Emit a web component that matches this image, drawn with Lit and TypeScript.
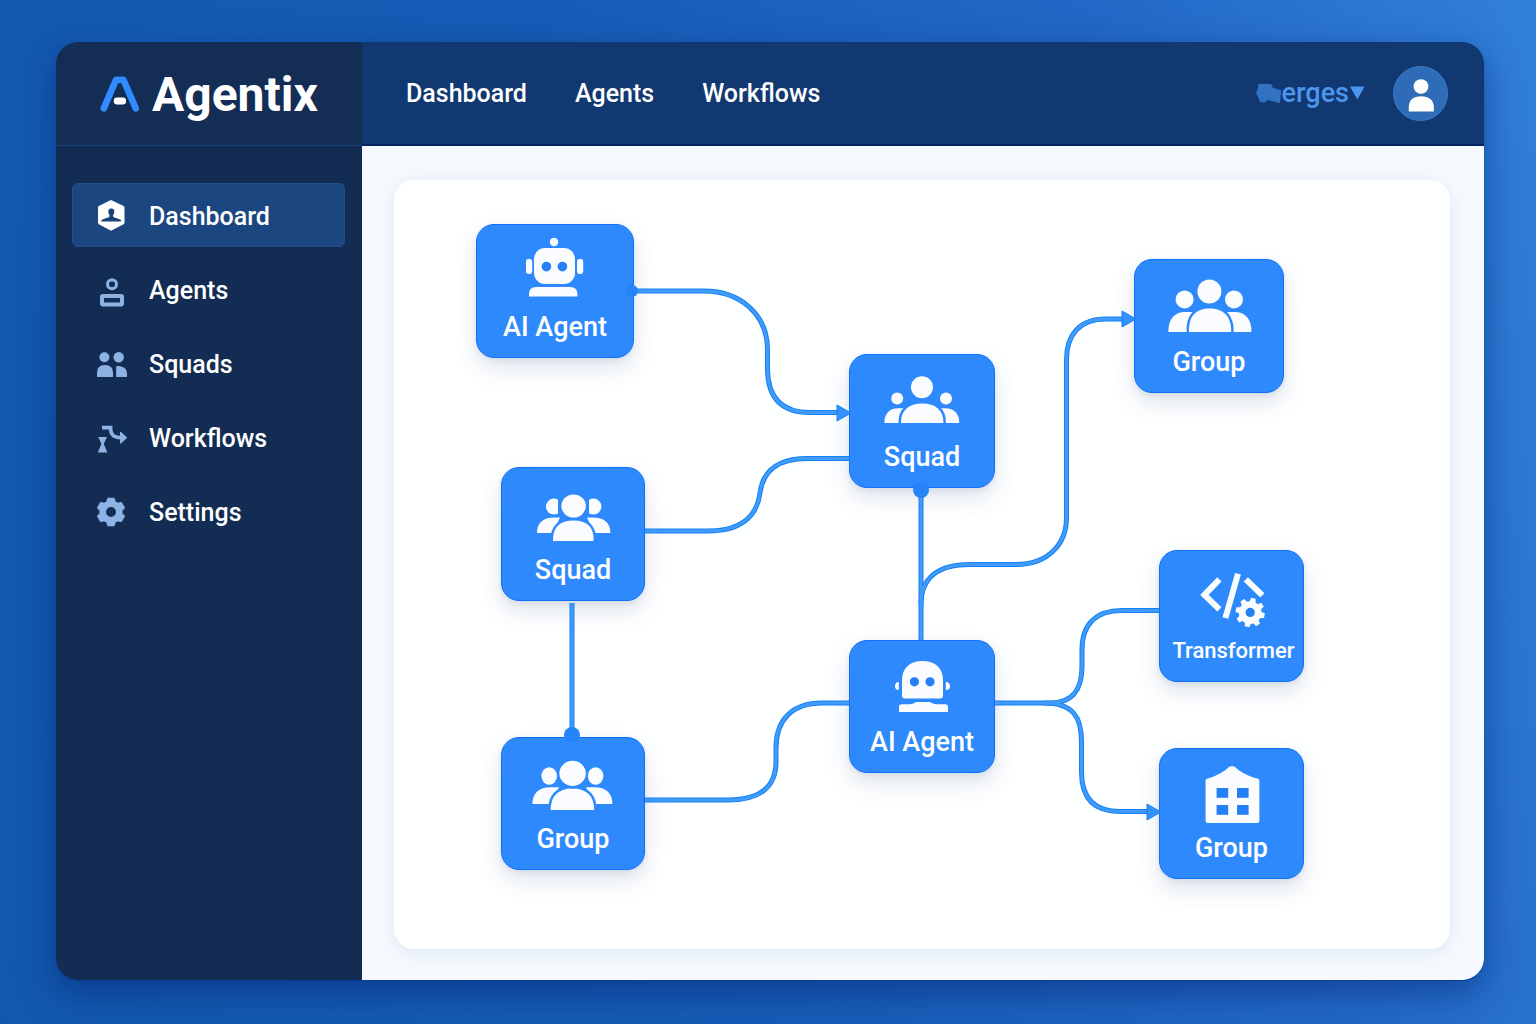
import { LitElement, html, svg, css } from "lit";
import { customElement, property, state } from "lit/decorators.js";
import { classMap } from "lit/directives/class-map.js";
import { styleMap } from "lit/directives/style-map.js";

/** Closed outline of a gear with evenly spaced, slightly tapered teeth. */
function gearPath(cx: number, cy: number, teeth: number, outer: number, inner: number, turnBy = 0): string {
  const step = (Math.PI * 2) / teeth;
  const points: string[] = [];
  for (let i = 0; i < teeth; i++) {
    const mid = i * step - Math.PI / 2 + turnBy;
    const corners: [number, number][] = [
      [inner, -0.34],
      [outer, -0.2],
      [outer, 0.2],
      [inner, 0.34],
    ];
    for (const [radius, turn] of corners) {
      const angle = mid + turn * step;
      points.push(`${(cx + radius * Math.cos(angle)).toFixed(2)} ${(cy + radius * Math.sin(angle)).toFixed(2)}`);
    }
  }
  return `M${points.join("L")}Z`;
}

const menuIcons = {
  dashboard: svg`
    <path d="M16 -1 L28.6 5 Q29.5 5.6 29.5 6.6 V21.6 Q29.5 22.6 28.6 23.2 L16 29.8 L3.8 23.2 Q3 22.6 3 21.6 V6.6 Q3 5.6 3.8 5 Z" fill="#fff"/>
    <path d="M16.3 7.6 C14 7.6 13.2 9.2 13.3 11 C13.4 12.8 14.6 13.6 14.6 15 C14.4 17 9 17.2 6.4 19.2 C6 20 6.6 20.4 8 20.4 H24.6 C26 20.4 26.8 20 26.2 19.2 C23.6 17.2 18.2 17 18 15 C18 13.6 19.2 12.8 19.3 11 C19.4 9.2 18.6 7.6 16.3 7.6 Z" fill="#1b4279"/>`,
  agents: svg`
    <circle cx="17" cy="9.3" r="4.5" fill="none" stroke="currentColor" stroke-width="3"/>
    <rect x="7" y="21" width="20" height="8.4" rx="1" fill="none" stroke="currentColor" stroke-width="4"/>`,
  squads: svg`
    <circle cx="9.4" cy="8.3" r="5" fill="currentColor"/>
    <circle cx="23.7" cy="8.3" r="5.2" fill="currentColor"/>
    <path d="M2 28 V23.6 Q2 16 10 16 Q18 16 18 23.6 V28 Z" fill="currentColor"/>
    <path d="M21.2 28 V18 Q21.2 17 22.4 17 C28.6 17 32 20 32 24.6 V28 Z" fill="currentColor"/>`,
  workflows: svg`
    <path d="M7 4.6 H15.6 C15.4 11 18 14.6 26 14.6" fill="none" stroke="currentColor" stroke-width="3.6"/>
    <path d="M25 9 Q25.4 8.6 26 9 L31.6 14 Q32 14.7 31.6 15.3 L26 20.4 Q25.4 20.8 25 20.2 Z" fill="currentColor"/>
    <path d="M3.2 14 H12 L8.8 21 L12.4 29.6 H2.8 L6.4 21 Z" fill="currentColor"/>`,
  settings: svg`
    <path fill-rule="evenodd" stroke="currentColor" stroke-width="2" stroke-linejoin="round" fill="currentColor"
      d="${gearPath(16, 15, 6, 13.6, 10.6)} M16 9 A6 6 0 1 0 16 21 A6 6 0 1 0 16 9 Z"/>`,
};

const nodeIcons = {
  robot: svg`
    <circle cx="47" cy="11" r="4.2"/>
    <rect x="27" y="17" width="41" height="36" rx="11"/>
    <circle class="hole" cx="39.4" cy="35.6" r="4.8"/>
    <circle class="hole" cx="55.4" cy="35.6" r="4.8"/>
    <rect x="19" y="28" width="6.2" height="15" rx="2.4"/>
    <rect x="70" y="28" width="6.2" height="15" rx="2.4"/>
    <path d="M22 65.6 V63 Q22 56 29 56 H63 Q70.4 56 70.4 63 V65.6 Z"/>`,
  assistant: svg`
    <path d="M30.4 51.4 Q28 51.4 28 49 V33 C28 21 36 14 48.4 14 C61 14 69 21 69 33 V49 Q69 51.4 66.6 51.4 Z"/>
    <circle class="hole" cx="40.4" cy="34.8" r="4.6"/>
    <circle class="hole" cx="56" cy="34.8" r="4.6"/>
    <path d="M24.8 35 V43 C22.6 43.4 21 41.6 21 39 C21 36.6 22.6 34.6 24.8 35 Z"/>
    <path d="M71.8 35 V43 C74.4 43.4 76 41.6 76 39 C76 36.6 74.4 34.6 71.8 35 Z"/>
    <path d="M25 65 V60 Q25 57.2 27.8 57.2 H36 C40 57.2 40 55 44 55 H54 C58 55 58 57.2 62 57.2 H71.2 Q74 57.2 74 60 V65 Z"/>`,
  squadSmall: svg`
    <circle cx="23.2" cy="37.6" r="6"/>
    <circle cx="72" cy="37.6" r="6"/>
    <path d="M10.4 62 C10 53 15.6 47.2 24 47.2 H30 V62 Z"/>
    <path d="M85.2 62 C85.6 53 80 47.2 71.6 47.2 H66 V62 Z"/>
    <path class="front" d="M27 62 C26.6 49 35 42.4 48.2 42.4 C61.4 42.4 69.8 49 69.4 62 Z"/>
    <circle cx="48" cy="26.2" r="11"/>`,
  groupWide: svg`
    <circle cx="23.6" cy="33.4" r="9"/>
    <circle cx="73" cy="33.4" r="9"/>
    <path d="M7.4 66 C7 53 13.6 46 24 46 H34 V66 Z"/>
    <path d="M90.4 66 C90.8 53 84.2 46 73.8 46 H62 V66 Z"/>
    <path class="front" d="M28 66 C27.4 50 35 42.4 48.6 42.4 C62.2 42.4 70.6 50 70.2 66 Z"/>
    <circle class="front" cx="48.4" cy="25.4" r="12"/>`,
  squadTight: svg`
    <ellipse cx="29" cy="32.6" rx="8" ry="8"/>
    <ellipse cx="68.4" cy="32.6" rx="8" ry="8"/>
    <rect class="gap" x="33" y="22" width="31" height="20"/>
    <path d="M12 59 C12 49 18 43.6 29 43.6 H35 L28 59 Z"/>
    <path d="M85.4 59 C85.4 49 79.4 43.6 68 43.6 H62 L69 59 Z"/>
    <path class="front" d="M28 67 C27.6 53 35 46.6 48.4 46.6 C61.8 46.6 69.2 53 68.6 67 Z"/>
    <ellipse class="front" cx="48.6" cy="32" rx="12.2" ry="11.6"/>`,
  groupTight: svg`
    <ellipse cx="24.2" cy="32" rx="7.8" ry="8.8"/>
    <ellipse cx="70.6" cy="32" rx="7.8" ry="8.8"/>
    <path d="M7.4 60 C7.4 49 14 43.2 25 43.2 H34 L27 60 Z"/>
    <path d="M87.4 60 C87.4 49 80.8 43.2 70 43.2 H61 L68 60 Z"/>
    <path class="front" d="M25.6 66 C25.6 52 33 44.4 47.4 44.4 C61.8 44.4 69.2 52 69.2 66 Z"/>
    <ellipse class="front" cx="47.6" cy="29.4" rx="13.2" ry="12.6"/>`,
  code: svg`
    <path class="line" d="M35.4 22.4 L20.4 38 L35.4 52.4"/>
    <path class="line" d="M54 16.8 L41.4 61"/>
    <path class="line" d="M61.8 22.4 L78.4 38.4"/>
    <path class="front" stroke-linejoin="round" d="${gearPath(66.2, 55.6, 8, 14.8, 11.4, 0.22)}"/>
    <circle class="hole" cx="66.2" cy="55.4" r="4.6"/>`,
  building: svg`
    <path d="M21.6 26 Q21.6 24.4 23 23.8 C32 21 38 18 42.6 14 Q48 8 53.4 14 C58 18 64 21 74 23.8 Q75.4 24.4 75.4 26 V66 Q75.4 68 73.4 68 H23.6 Q21.6 68 21.6 66 Z"/>
    <rect class="hole" x="32.6" y="33" width="11.6" height="9.8"/>
    <rect class="hole" x="53" y="33" width="11.6" height="9.8"/>
    <rect class="hole" x="32.6" y="50" width="11.6" height="9.8"/>
    <rect class="hole" x="53" y="50" width="11.6" height="9.8"/>`,
};

interface FlowNode {
  label: string;
  icon: keyof typeof nodeIcons;
  x: number;
  y: number;
  w: number;
  h: number;
  compact?: boolean;
}

const nodes: FlowNode[] = [
  { label: "AI Agent", icon: "robot", x: 82, y: 44, w: 158, h: 134 },
  { label: "Squad", icon: "squadSmall", x: 455, y: 174, w: 146, h: 134 },
  { label: "Group", icon: "groupWide", x: 740, y: 79, w: 150, h: 134 },
  { label: "Squad", icon: "squadTight", x: 107, y: 287, w: 144, h: 134 },
  { label: "Group", icon: "groupTight", x: 107, y: 557, w: 144, h: 133 },
  { label: "AI Agent", icon: "assistant", x: 455, y: 460, w: 146, h: 133 },
  { label: "Transformer", icon: "code", x: 765, y: 370, w: 145, h: 132, compact: true },
  { label: "Group", icon: "building", x: 765, y: 568, w: 145, h: 131 },
];

const edges: string[] = [
  "M240 111 H310 C346 111 373.5 134 373.5 170 V190 C374 218 388 232.5 416 232.5 H446",
  "M251 351 H314 C346 351 363 337 366 313 C369 290 384 278.5 414 278.5 H455",
  "M178 423 V557",
  "M251 620 H334 C367 620 382 606 382 582 V568 C382 540 398 523 428 523 H455",
  "M527 308 V460",
  "M527 424 C527 398 544 384.5 576 384.5 H622 C654 384.5 672.5 364 672.5 338 V180 C672.5 154 686 139 712 139 H732",
  "M601 523 H656 C680 523 688 508 688 486 V470 C688 444 702 430.5 728 430.5 H765",
  "M650 523 C680 523 687.5 538 687.5 562 V592 C687.5 618 700 631.5 726 631.5 H756",
];

const arrowTips: [number, number][] = [
  [457, 233],
  [742, 139],
  [767, 632],
];

const ports: [number, number, number][] = [
  [238, 111, 6],
  [178, 555, 8],
  [527, 310, 8],
];

@customElement("flow-node")
class FlowNodeCard extends LitElement {
  @property() label = "";
  @property() icon: keyof typeof nodeIcons = "robot";
  @property({ type: Boolean }) compact = false;

  static styles = css`
    :host {
      display: block;
    }
    .card {
      box-sizing: border-box;
      height: 100%;
      display: flex;
      flex-direction: column;
      align-items: center;
      justify-content: space-between;
      padding: 6px 0 14px;
      border: 1px solid #0f70fa;
      border-radius: 18px;
      background: #2e89fc;
      box-shadow: 0 10px 22px rgba(60, 90, 140, 0.16), 0 2px 5px rgba(60, 90, 140, 0.1);
    }
    .icon {
      flex: none;
      width: 96px;
      height: 72px;
      fill: #fafcff;
    }
    .hole {
      fill: #2580f6;
    }
    .gap {
      fill: #2e89fc;
    }
    .front {
      stroke: #2e89fc;
      stroke-width: 5;
      paint-order: stroke;
    }
    .line {
      fill: none;
      stroke: #fafcff;
      stroke-width: 6;
    }
    .label {
      font-size: 27px;
      line-height: 32px;
      font-weight: 500;
      color: #ffffff;
      white-space: nowrap;
    }
    .compact .label {
      font-size: 22px;
      padding-left: 4px;
    }
  `;

  render() {
    return html`
      <div class=${classMap({ card: true, compact: this.compact })}>
        <svg class="icon" viewBox="0 0 96 72" aria-hidden="true">${nodeIcons[this.icon]}</svg>
        <span class="label">${this.label}</span>
      </div>
    `;
  }
}

@customElement("flow-canvas")
class FlowCanvas extends LitElement {
  static styles = css`
    :host {
      display: block;
      position: relative;
      min-height: 740px;
      border-radius: 20px;
      background: #feffff;
      box-shadow: 0 4px 18px rgba(40, 90, 170, 0.12);
    }
    .edges {
      position: absolute;
      inset: 0;
      width: 100%;
      height: 100%;
      fill: none;
    }
    .rim {
      stroke: #1480f3;
      stroke-width: 5;
    }
    .core {
      stroke: #419bf8;
      stroke-width: 3;
    }
    .tip {
      fill: #3590fb;
      stroke: #1480f3;
      stroke-width: 1;
      stroke-linejoin: round;
    }
    .port {
      fill: #2484f8;
    }
    .node {
      position: absolute;
    }
  `;

  render() {
    return html`
      ${nodes.map(
        (n) => html`
          <flow-node
            class="node"
            .label=${n.label}
            .icon=${n.icon}
            .compact=${!!n.compact}
            style=${styleMap({ left: `${n.x}px`, top: `${n.y}px`, width: `${n.w}px`, height: `${n.h}px` })}
          ></flow-node>
        `,
      )}
      <svg class="edges" aria-hidden="true">
        ${edges.map((d) => svg`<path class="rim" d=${d}/>`)}
        ${edges.map((d) => svg`<path class="core" d=${d}/>`)}
        ${ports.map(([x, y, r]) => svg`<circle class="port" cx=${x} cy=${y} r=${r}/>`)}
        ${arrowTips.map(([x, y]) => svg`<path class="tip" d=${`M${x} ${y} L${x - 14} ${y - 8} V${y + 8} Z`}/>`)}
      </svg>
    `;
  }
}

const menu: { label: string; icon: keyof typeof menuIcons }[] = [
  { label: "Dashboard", icon: "dashboard" },
  { label: "Agents", icon: "agents" },
  { label: "Squads", icon: "squads" },
  { label: "Workflows", icon: "workflows" },
  { label: "Settings", icon: "settings" },
];

@customElement("app-root")
class AppRoot extends LitElement {
  @state() private active = "Dashboard";

  static styles = css`
    :host {
      box-sizing: border-box;
      display: flex;
      min-height: 100vh;
      padding: 42px 52px 44px 56px;
      font-family: Roboto, "Liberation Sans", sans-serif;
      background: linear-gradient(75deg, #1258ae 0%, #165cb6 45%, #2268c6 75%, #3180d9 100%);
    }
    .window {
      flex: 1;
      display: grid;
      grid-template-columns: 306px 1fr;
      grid-template-rows: 104px 1fr;
      border-radius: 22px;
      overflow: hidden;
      box-shadow: 0 1px 1px #0a3f9c, 0 12px 34px rgba(4, 32, 110, 0.5);
    }
    .brand {
      display: flex;
      align-items: center;
      gap: 12px;
      padding-left: 44px;
      background: #142d55;
      border-bottom: 1px solid #15427f;
      color: #ffffff;
    }
    .mark {
      width: 40px;
      height: 36px;
    }
    .name {
      padding-top: 2px;
      font-size: 48px;
      line-height: 56px;
      font-weight: 700;
    }
    .topbar {
      display: flex;
      align-items: center;
      justify-content: space-between;
      padding: 0 36px 0 44px;
      background: #123871;
      border-bottom: 2px solid #06245f;
    }
    .links {
      display: flex;
      gap: 48px;
    }
    .link {
      padding-top: 2px;
      font-size: 25px;
      line-height: 32px;
      font-weight: 500;
      color: #ffffff;
      text-decoration: none;
    }
    .account {
      display: flex;
      align-items: center;
      gap: 28px;
    }
    .picker {
      display: flex;
      align-items: center;
      padding: 0;
      border: 0;
      background: none;
      font: inherit;
      font-size: 27px;
      line-height: 32px;
      font-weight: 500;
      color: #4b96ee;
      cursor: pointer;
    }
    .blob {
      width: 27px;
      height: 21px;
      fill: #3272c2;
    }
    .caret {
      width: 16px;
      height: 14px;
      fill: #4b96ee;
    }
    .avatar {
      display: block;
      width: 55px;
      height: 55px;
      padding: 0;
      border: 0;
      border-radius: 50%;
      background: none;
      cursor: pointer;
    }
    .avatar svg {
      display: block;
      width: 100%;
      height: 100%;
    }
    .sidebar {
      padding: 37px 17px 37px 16px;
      background: #132c54;
    }
    .menu {
      display: flex;
      flex-direction: column;
      gap: 10px;
      margin: 0;
      padding: 0;
      list-style: none;
    }
    .item {
      box-sizing: border-box;
      height: 64px;
      display: flex;
      align-items: center;
      gap: 22px;
      padding: 4px 0 0 22px;
      border: 1px solid transparent;
      border-radius: 6px;
      font-size: 25px;
      line-height: 32px;
      font-weight: 500;
      color: #ffffff;
      text-decoration: none;
    }
    .item.active {
      background: #1c4680;
      border-color: #22508f;
    }
    .glyph {
      width: 32px;
      height: 32px;
      color: #8db3e5;
      overflow: visible;
    }
    .main {
      display: grid;
      padding: 34px 34px 31px 32px;
      background: #f6fafe;
    }
  `;

  render() {
    return html`
      <div class="window">
        <div class="brand">
          <svg class="mark" viewBox="0 0 40 36" aria-hidden="true">
            <path d="M3.8 32.4 L16 3.8 H23.4 L35.8 32.4" fill="none" stroke="#2f8bff" stroke-width="6.6" stroke-linecap="round" stroke-linejoin="round"/>
            <rect x="13.8" y="21.6" width="12.2" height="7" rx="3" fill="#ffffff"/>
          </svg>
          <span class="name">Agentix</span>
        </div>
        <header class="topbar">
          <nav class="links" aria-label="Primary">
            <a class="link" href="#dashboard">Dashboard</a>
            <a class="link" href="#agents">Agents</a>
            <a class="link" href="#workflows">Workflows</a>
          </nav>
          <div class="account">
            <button class="picker" type="button">
              <svg class="blob" viewBox="0 0 25 20" aria-hidden="true">
                <path d="M3 1 H15 L16.5 4.5 L24.6 7 L23.4 19.4 L17.6 17.6 L11 16.2 L9.5 18.6 L4.5 18 L3 14.4 L0.6 9.6 L2.2 6 Z"/>
              </svg>
              <span>erges</span>
              <svg class="caret" viewBox="0 0 16 14" aria-hidden="true"><path d="M1 0.5 H15.5 L8.4 13.5 Z"/></svg>
            </button>
            <button class="avatar" type="button" aria-label="Account">
              <svg viewBox="0 0 55 55" aria-hidden="true">
                <circle cx="27.5" cy="27.5" r="27" fill="#2f6cb8" stroke="#3a7cc9" stroke-width="1"/>
                <circle cx="28" cy="20.6" r="7.4" fill="#ffffff"/>
                <path d="M15.8 45.4 V41 C15.8 34 20.4 30.2 28 30.2 C35.6 30.2 40.8 34 40.8 41 V45.4 Z" fill="#ffffff"/>
              </svg>
            </button>
          </div>
        </header>
        <nav class="sidebar" aria-label="Sections">
          <ul class="menu">
            ${menu.map(
              (m) => html`
                <li>
                  <a
                    class=${classMap({ item: true, active: m.label === this.active })}
                    href="#${m.icon}"
                    @click=${() => (this.active = m.label)}
                  >
                    <svg class="glyph" viewBox="0 0 32 32" aria-hidden="true">${menuIcons[m.icon]}</svg>
                    <span>${m.label}</span>
                  </a>
                </li>
              `,
            )}
          </ul>
        </nav>
        <main class="main">
          <flow-canvas></flow-canvas>
        </main>
      </div>
    `;
  }
}
